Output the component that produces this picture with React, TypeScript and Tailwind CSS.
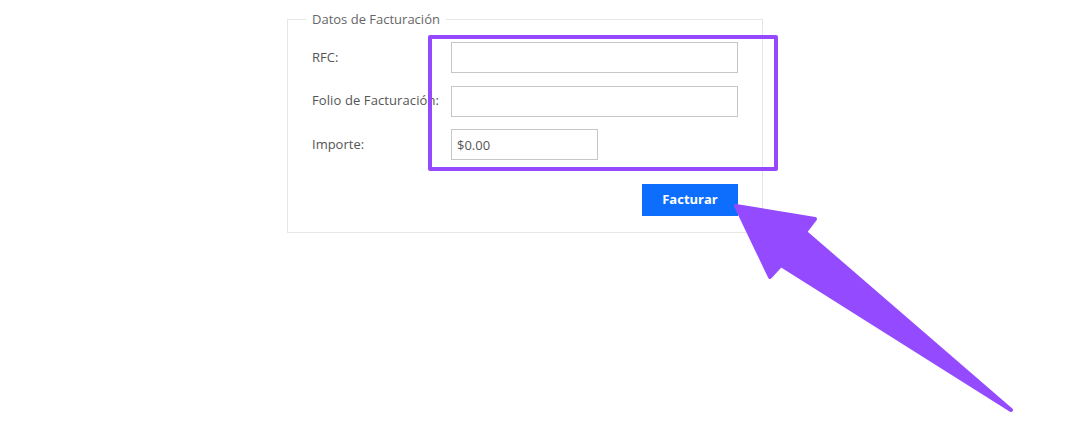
export default function App() {
  return (
    <div className="relative w-full h-[439px] bg-white overflow-hidden font-['Open_Sans',sans-serif]">
      <fieldset className="ml-[287px] mt-[10px] w-[476px] border border-[#e6e6e6] px-[24px] pt-[14px] pb-[16px]">
        <legend className="ml-[-6px] px-[6px] text-[13px] leading-[18px] text-[#666]">Datos de Facturación</legend>
        <div className="flex flex-col gap-[12.5px]">
          <div className="flex items-center">
            <label className="w-[139px] text-[13px] text-[#555]">RFC:</label>
            <input className="h-[31px] w-[287px] border border-[#c6c6c6] px-[6px] text-[13px] outline-none" />
          </div>
          <div className="flex items-center">
            <label className="w-[139px] text-[13px] text-[#555] whitespace-nowrap tracking-[0.1px]">Folio de Facturación:</label>
            <input className="h-[31px] w-[287px] border border-[#c6c6c6] px-[6px] text-[13px] outline-none" />
          </div>
          <div className="flex items-center">
            <label className="w-[139px] text-[13px] text-[#555]">Importe:</label>
            <input
              defaultValue="$0.00"
              className="h-[31px] w-[147px] border border-[#c6c6c6] px-[5px] text-[13px] text-[#555] outline-none"
            />
          </div>
        </div>
        <div className="flex justify-end mt-[24px]">
          <button className="h-[32px] w-[96px] bg-[#0d6efd] text-white text-[13px] font-bold">Facturar</button>
        </div>
      </fieldset>

      <div className="absolute left-[428px] top-[35px] w-[350px] h-[136px] border-[4px] border-[#9549ff] rounded-[2px]" />

      <svg className="absolute left-0 top-0" width="1085" height="439" viewBox="0 0 1085 439">
        <polygon
          points="736,206 815,219 805,232 1011,410 781,265 770,277"
          fill="#944bff"
          stroke="#944bff"
          strokeWidth="4"
          strokeLinejoin="round"
        />
      </svg>
    </div>
  );
}
